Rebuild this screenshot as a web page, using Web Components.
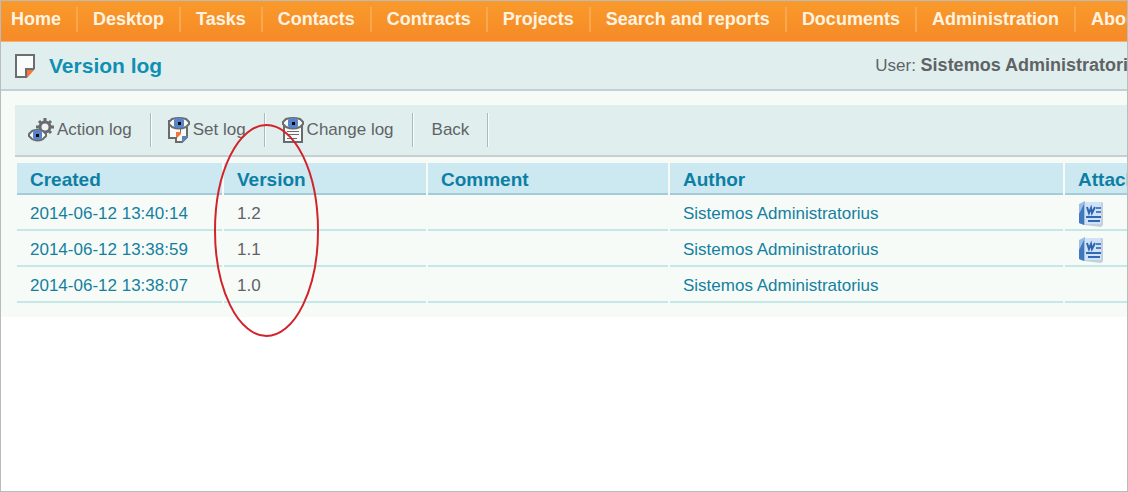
<!DOCTYPE html>
<html lang="en">
<head>
<meta charset="utf-8">
<title>Version log</title>
<style>
  body {
    margin: 0;
    background: #fff;
    font-family: "Liberation Sans", Arial, sans-serif;
    font-size: 17px;
    line-height: 24px;
    color: #5f6366;
  }
</style>
</head>
<body>
<app-frame>
  <main-nav slot="nav"></main-nav>
  <title-bar slot="title" heading="Version log" user="Sistemos Administratorius"></title-bar>
  <tool-bar>
    <tool-button icon="action">Action log</tool-button>
    <tool-button icon="set">Set log</tool-button>
    <tool-button icon="change">Change log</tool-button>
    <tool-button>Back</tool-button>
  </tool-bar>
  <version-table></version-table>
</app-frame>

<script>
const EYE = `
  <path d="M1 5 L4 2 Q11 0 18 2 L21 5 V7 L18 10 Q11 13 4 10 L1 7Z" fill="#f7faf8" stroke="#686c6d" stroke-width="2"/>
  <path d="M8 1 H14 L16 3 V9 L14 11 H8 L6 9 V3Z" fill="#5684c6"/>
  <rect x="10" y="5" width="3" height="3" fill="#000"/>
`;

const ICONS = {
  action: `
    <svg width="26" height="24" viewBox="0 0 26 24" aria-hidden="true">
      <circle cx="17" cy="9" r="5" fill="#eef4f3" stroke="#686c6d" stroke-width="3"/>
      <path d="M17 0 V4 M17 14 V18 M8 9 H12 M22 9 H26 M11 3 L14 6 M20 12 L23 15 M23 3 L20 6" stroke="#686c6d" stroke-width="3"/>
      <path d="M1 16 L4 13 Q9 11 15 13 L18 16 V18 L15 21 Q9 24 4 21 L1 18Z" fill="#f7faf8" stroke="#686c6d" stroke-width="2"/>
      <path d="M7 12 H12 L14 14 V20 L12 22 H7 L5 20 V14Z" fill="#5684c6"/>
      <rect x="8" y="16" width="3" height="3" fill="#000"/>
    </svg>`,
  set: `
    <svg width="22" height="26" viewBox="0 0 22 26" aria-hidden="true">
      <path d="M1 4 H13 V21 H1Z" fill="#f7faf8" stroke="#686c6d" stroke-width="2"/>
      <path d="M8 16 H19 V20 L14 25 H8Z" fill="#f7faf8"/>
      <path d="M13 10 H19 V20 H13Z" fill="#f7faf8"/>
      <path d="M8 15 H13 V17 L9 21 H8Z" fill="#f4743b"/>
      <path d="M8 20 V25 H14 L19 20 V10" fill="none" stroke="#686c6d" stroke-width="2"/>
      <path d="M14 19 H20 L14 26Z" fill="#5684c6"/>
      ${EYE}
    </svg>`,
  change: `
    <svg width="22" height="26" viewBox="0 0 22 26" aria-hidden="true">
      <path d="M2 9 H20 V25 H2Z" fill="#f7faf8" stroke="#686c6d" stroke-width="2"/>
      <path d="M5 14.5 H17 M5 17.5 H17 M5 21.5 H15" stroke="#686c6d" stroke-width="1"/>
      ${EYE}
    </svg>`
};

const WORD_ICON = `
  <svg width="26" height="26" viewBox="0 0 26 26" role="img" aria-label="Word document">
    <path d="M6 1 H24 L25 2 V24 L23 26 L6 24Z" fill="#c3d0dc"/>
    <path d="M7 1 H23 V23 H7Z" fill="#cfe2f8"/>
    <path d="M1 3 L7 0 V24 L1 22Z" fill="#9dbde2"/>
    <path d="M1 13 L6 3 V24 L1 22Z" fill="#3f78bd"/>
    <path d="M9 6 L11 12 L13 7 L14 12 L17 6" fill="none" stroke="#2e65ae" stroke-width="2"/>
    <path d="M18 7 H23 M18 11 H23" stroke="#4b80c2" stroke-width="2"/>
    <path d="M8 16 H23 M10 20 H22" stroke="#2f69b3" stroke-width="2"/>
  </svg>`;

class AppFrame extends HTMLElement {
  constructor() {
    super();
    this.shadow = this.attachShadow({ mode: 'open' });
  }

  connectedCallback() {
    this.shadow.innerHTML = `
      <style>
        :host {
          display: block;
          position: relative;
          box-sizing: border-box;
          min-height: 100vh;
          border: 1px solid #b9bbbd;
          overflow: hidden;
        }

        /* the page is wider than the window it is seen through */
        .page {
          margin-right: -60px;
          background: #f7fbf8;
        }

        .content {
          padding: 14px 0 14px 14px;
        }

        .marker {
          position: absolute;
          left: 213px;
          top: 123px;
        }
      </style>

      <div class="page">
        <slot name="nav"></slot>
        <slot name="title"></slot>
        <main class="content"><slot></slot></main>
      </div>
      <svg class="marker" width="106" height="214" viewBox="0 0 106 214" aria-hidden="true">
        <ellipse cx="52.5" cy="106.5" rx="51.5" ry="105.5" fill="none" stroke="#d2232a" stroke-width="2"/>
      </svg>
    `;
  }
}

class MainNav extends HTMLElement {
  constructor() {
    super();
    this.shadow = this.attachShadow({ mode: 'open' });
  }

  get items() {
    return ['Home', 'Desktop', 'Tasks', 'Contacts', 'Contracts', 'Projects',
      'Search and reports', 'Documents', 'Administration', 'About'];
  }

  connectedCallback() {
    this.shadow.innerHTML = `
      <style>
        :host {
          display: block;
          background: linear-gradient(#f99a2b, #f68a28);
          border-bottom: 1px solid #f6b074;
        }

        ul {
          display: flex;
          list-style: none;
          margin: 0;
          padding: 6px 0 9px;
        }

        li {
          padding: 0 15px;
          border-left: 2px solid #faa850;
        }

        li:first-child {
          padding-left: 10px;
          border-left: 0;
        }

        a {
          color: #fff3e2;
          font-size: 18px;
          font-weight: bold;
          text-decoration: none;
          white-space: nowrap;
        }
      </style>

      <nav>
        <ul>${this.items.map(item => `<li><a href="#">${item}</a></li>`).join('')}</ul>
      </nav>
    `;
  }
}

class TitleBar extends HTMLElement {
  constructor() {
    super();
    this.shadow = this.attachShadow({ mode: 'open' });
  }

  connectedCallback() {
    this.shadow.innerHTML = `
      <style>
        :host {
          display: flex;
          justify-content: space-between;
          align-items: center;
          padding: 11px 38px 11px 14px;
          background: #e0efee;
          border-bottom: 2px solid #c3d1d2;
        }

        .title {
          display: flex;
          align-items: center;
          gap: 14px;
        }

        svg {
          display: block;
        }

        h1 {
          margin: 0;
          font-size: 21px;
          color: #118fb3;
        }

        p {
          margin: 0;
          white-space: nowrap;
        }

        b {
          font-size: 18px;
        }
      </style>

      <div class="title">
        <svg width="20" height="24" viewBox="0 0 20 24" aria-hidden="true">
          <path d="M1 1 H19 V15 L11 23 H1Z" fill="#f9fcfa"/>
          <path d="M11 15 H20 L12 24 H11Z" fill="#f4743b"/>
          <path d="M19 15 V1 H1 V23 H11 V15 H19" fill="none" stroke="#6a6e70" stroke-width="2"/>
        </svg>
        <h1>${this.getAttribute('heading')}</h1>
      </div>
      <p>User: <b>${this.getAttribute('user')}</b></p>
    `;
  }
}

class ToolBar extends HTMLElement {
  constructor() {
    super();
    this.shadow = this.attachShadow({ mode: 'open' });
  }

  connectedCallback() {
    this.shadow.innerHTML = `
      <style>
        :host {
          display: flex;
          padding: 8px 0;
          margin-bottom: 6px;
          background: #e0efee;
          border-bottom: 2px solid #c3d1d4;
        }
      </style>
      <slot></slot>
    `;
  }
}

class ToolButton extends HTMLElement {
  constructor() {
    super();
    this.shadow = this.attachShadow({ mode: 'open' });
  }

  connectedCallback() {
    const icon = ICONS[this.getAttribute('icon')] || '';
    this.shadow.innerHTML = `
      <style>
        :host {
          display: block;
          border-left: 1px solid #f8fcfb;
          border-right: 1px solid #a9bac4;
        }

        :host(:first-child) {
          border-left: 0;
        }

        :host(:last-child) {
          box-shadow: 1px 0 #f8fcfb;
        }

        button {
          display: flex;
          align-items: center;
          gap: 3px;
          height: 34px;
          padding: 0 18px 0 ${icon ? 16 : 18}px;
          border: 0;
          background: none;
          color: inherit;
          font: inherit;
          white-space: nowrap;
          cursor: pointer;
        }

        :host(:first-child) button {
          padding-left: 13px;
        }
      </style>
      <button type="button">${icon}<span><slot></slot></span></button>
    `;
  }
}

class VersionTable extends HTMLElement {
  constructor() {
    super();
    this.shadow = this.attachShadow({ mode: 'open' });
  }

  get rows() {
    return [
      { created: '2014-06-12 13:40:14', version: '1.2', author: 'Sistemos Administratorius', file: true },
      { created: '2014-06-12 13:38:59', version: '1.1', author: 'Sistemos Administratorius', file: true },
      { created: '2014-06-12 13:38:07', version: '1.0', author: 'Sistemos Administratorius', file: false }
    ];
  }

  renderRow(row) {
    return `
      <tr>
        <td><a href="#">${row.created}</a></td>
        <td>${row.version}</td>
        <td></td>
        <td><a href="#">${row.author}</a></td>
        <td>${row.file ? `<a href="#">${WORD_ICON}</a>` : ''}</td>
      </tr>`;
  }

  connectedCallback() {
    this.shadow.innerHTML = `
      <style>
        :host {
          display: block;
        }

        table {
          width: 100%;
          table-layout: fixed;
          border-collapse: separate;
          border-spacing: 2px 0;
        }

        th, td {
          box-sizing: border-box;
          padding: 4px 12px 0 13px;
          text-align: left;
          white-space: nowrap;
        }

        th {
          height: 32px;
          background: #cce8f0;
          border-bottom: 2px solid #a3cbd8;
          color: #0d7fa5;
          font-size: 19px;
        }

        td {
          height: 36px;
          border-bottom: 2px solid #c5e7e6;
        }

        .created { width: 205px; }
        .version { width: 202px; }
        .comment { width: 240px; }
        .attachments { width: 120px; }

        a {
          color: #14809f;
          text-decoration: none;
        }

        svg {
          display: block;
        }
      </style>

      <table>
        <thead>
          <tr>
            <th class="created">Created</th>
            <th class="version">Version</th>
            <th class="comment">Comment</th>
            <th>Author</th>
            <th class="attachments">Attachments</th>
          </tr>
        </thead>
        <tbody>${this.rows.map(row => this.renderRow(row)).join('')}</tbody>
      </table>
    `;
  }
}

customElements.define('app-frame', AppFrame);
customElements.define('main-nav', MainNav);
customElements.define('title-bar', TitleBar);
customElements.define('tool-bar', ToolBar);
customElements.define('tool-button', ToolButton);
customElements.define('version-table', VersionTable);
</script>
</body>
</html>
